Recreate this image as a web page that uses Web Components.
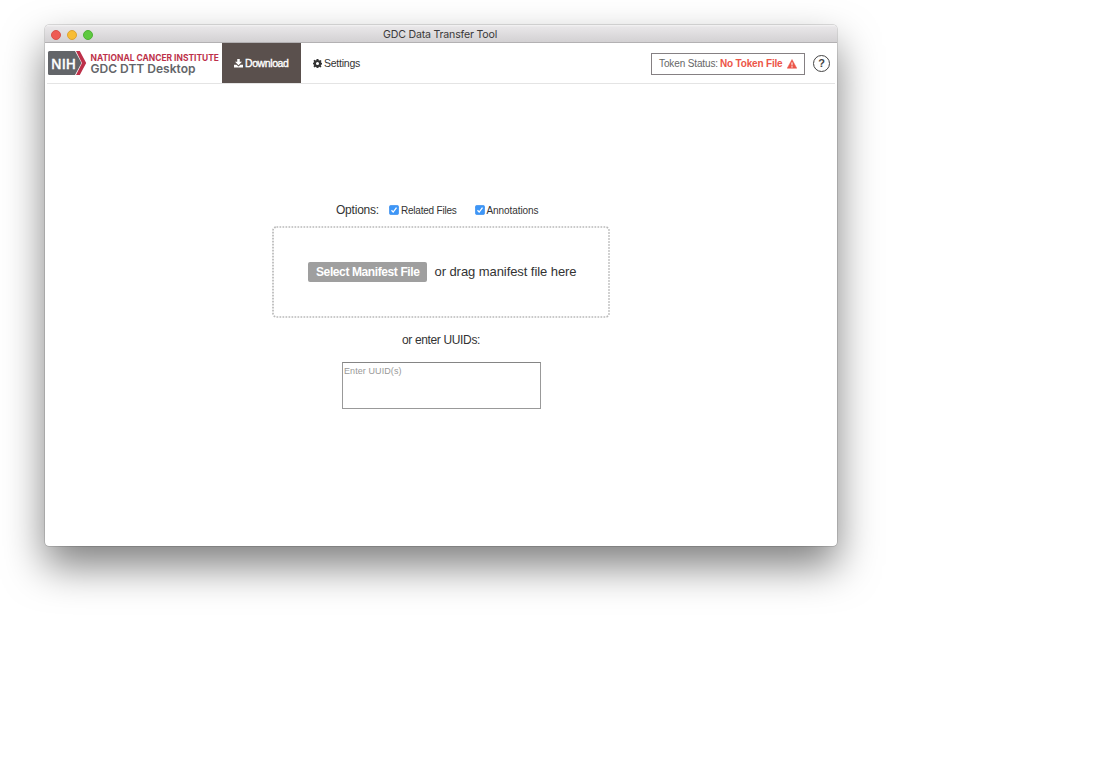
<!DOCTYPE html>
<html lang="en"><head><meta charset="utf-8"><title>GDC Data Transfer Tool</title>
<style>
html,body{margin:0;height:100%;background:#fff;overflow:hidden}
body{font-family:"Liberation Sans",Arial,sans-serif;color:#333;padding:25px 0 0 45px;box-sizing:border-box}
</style></head><body>
<app-window></app-window>
<script>
const define=(name,html,init)=>customElements.define(name,class extends HTMLElement{
  connectedCallback(){
    if(this.shadowRoot)return;
    this.attachShadow({mode:'open'}).innerHTML=html;
    if(init)init(this);
  }
});

// One line of text whose tracking is adjusted to fill the "fit" width.
define('fit-text',`<style>:host{display:block;white-space:nowrap;flex:none}span{display:inline-block}</style><span><slot></slot></span>`,el=>{
  const w=parseFloat(el.getAttribute('fit'));
  el.style.width=w+'px';
  const s=el.shadowRoot.querySelector('span');
  const diff=w-s.getBoundingClientRect().width;
  s.style.letterSpacing=diff/el.textContent.length+'px';
});

define('title-bar',`<style>
:host{display:grid;grid-template-columns:1fr auto 1fr;align-items:center;height:17px;border-bottom:1px solid #b3b1b3;background:linear-gradient(#f4f3f4 0,#e8e6e8 2px,#d3d1d3 100%);border-radius:4px 4px 0 0;color:#3a393a;font:10.6px/16px Inter,"Liberation Sans",sans-serif}
.dots{display:flex;gap:6px;padding:1px 0 0 6px}i{width:10px;height:10px;border-radius:50%;box-sizing:border-box;background:#ee5b54;border:.5px solid #d9524b}
i:nth-child(2){background:#f8bd35;border-color:#dda333}i:nth-child(3){background:#5ec93f;border-color:#4eb135}
fit-text{padding-top:2px;margin-right:2px}
</style><div class="dots"><i></i><i></i><i></i></div><fit-text fit="114">GDC Data Transfer Tool</fit-text><div></div>`);

define('nci-logo',`<style>:host{display:block;width:173px;height:26px}svg{display:block;overflow:visible}</style>
<svg width="173" height="26" viewBox="0 0 173 26">
<path d="M1.5 0H27l6.5 12L27 24H1.5Q0 24 0 22.5v-21Q0 0 1.5 0z" fill="#636569"/>
<path d="M28 0h3.8l6.4 12-6.4 12H28l6-12z" fill="#bd3049"/>
<text x="3" y="17.5" font-family="Open Sans" font-size="15" font-weight="600" fill="#fff" stroke="#fff" stroke-width=".3" textLength="25" lengthAdjust="spacingAndGlyphs">NIH</text>
<text x="42.5" y="9.7" font-family="Inter" font-size="8.9" font-weight="700" fill="#bd3049" textLength="128.5" lengthAdjust="spacingAndGlyphs">NATIONAL CANCER INSTITUTE</text>
<text x="42.5" y="22" font-family="Inter" font-size="12" font-weight="600" fill="#636569" textLength="105" lengthAdjust="spacingAndGlyphs">GDC DTT Desktop</text>
</svg>`);

define('nav-tab',`<style>
:host{display:flex;align-items:center;box-sizing:border-box;height:40px;font-size:10.5px;gap:2px;padding:0 0 0 12px;color:#333}
:host([active]){width:79px;background:#5a504d;color:#fff;-webkit-text-stroke:.35px #fff}
svg{fill:currentColor;display:block}
</style><slot name="icon"></slot><slot></slot>`);

define('token-status',`<style>
:host{display:flex;align-items:center;box-sizing:border-box;width:154px;height:22px;border:1px solid #858083;padding-left:7px;font-size:10px;color:#666}
b{color:#ec5548;margin-left:2px}svg{margin-left:4px}
</style><fit-text fit="59">Token Status:</fit-text><b><fit-text fit="62.5">No Token File</fit-text></b>
<svg width="10" height="10" viewBox="0 0 20 20"><path d="M10 1 19.5 18.5H.5z" fill="#ec5548" stroke="#ec5548" stroke-linejoin="round"/><path d="M8.8 7h2.4l-.4 6H9.2zM8.8 14.4h2.4v2.4H8.8z" fill="#fff"/></svg>`);

define('help-button',`<style>:host{display:flex;box-sizing:border-box;width:17px;height:17px;border:1px solid #444;border-radius:50%;align-items:center;justify-content:center;font:bold 11px/15px "Liberation Sans",sans-serif;color:#444}</style>?`);

define('nav-bar',`<style>
:host{display:flex;align-items:center;height:40px;margin:0 2px;border-bottom:1px solid #e4e4e4}
nci-logo{margin:1px 1px 0}.tabs{display:flex}token-status{margin:1px 8px 0 auto}help-button{margin:1px 5px 0 0}
svg{display:block;fill:currentColor}
</style><nci-logo></nci-logo><div class="tabs">
<nav-tab active><svg slot="icon" width="9" height="9" viewBox="0 0 18 18"><path d="M6.5 0h5v5.5H16L9 12.5 2 5.5h4.5z"/><path d="M0 11.5h5L9 15l4-3.5h5V17H0z"/></svg><fit-text fit="43.5">Download</fit-text></nav-tab>
<nav-tab><svg slot="icon" width="9" height="9" viewBox="0 0 20 20"><path fill-rule="evenodd" d="M8 0h4l.6 3 1.5.6L16.6 2 19 4.4l-1.6 2.5.6 1.3 2 .4v3.6l-2.2.4-.6 1.4 1.6 2.4-2.4 2.4-2.4-1.6-1.5.6-.5 2.2H8l-.5-2.2-1.5-.6-2.4 1.6L1 16l1.6-2.4L2 12.2l-2-.4V8.2l2-.4.6-1.4L1 4 3.4 1.6 6 3.4 7.4 3zm2 6.7a3.4 3.4 0 1 0 0 6.8 3.4 3.4 0 0 0 0-6.8z"/></svg><fit-text fit="36">Settings</fit-text></nav-tab>
</div><token-status></token-status><help-button></help-button>`);

define('check-option',`<style>:host{display:flex;align-items:center;gap:2px;font-size:10px}svg{display:block}</style>
<svg width="10" height="10" viewBox="0 0 10 10"><rect x=".25" y=".25" width="9.5" height="9.5" rx="2" fill="#3d96f7" stroke="#3587e6" stroke-width=".5"/><path d="M2.5 5.2 4.2 7.1 7.5 2.7" fill="none" stroke="#fff" stroke-width="1.3"/></svg><slot></slot>`);

define('drop-zone',`<style>
:host{display:flex;align-items:center;box-sizing:border-box;width:338px;height:92px;padding-left:36px;font-size:13px;color:#333;position:relative}
svg{position:absolute;inset:0}
button{all:unset;box-sizing:border-box;width:119px;height:20px;padding-left:8px;background:#9f9f9f;border-radius:2px;color:#fff;font-weight:bold;font-size:12px;line-height:19px;margin-right:7.5px}
.hint{margin-bottom:2px}
</style><svg width="338" height="92"><rect x="1" y="1" width="336" height="90" rx="3.5" fill="none" stroke="#b9b9b9" stroke-width="1.7" stroke-dasharray="1.7 1.3"/></svg>
<button><fit-text fit="103.5">Select Manifest File</fit-text></button><fit-text class="hint" fit="142">or drag manifest file here</fit-text>`);

define('uuid-input',`<style>:host{display:block}textarea{display:block;box-sizing:border-box;width:199px;height:47px;border:1px solid #999;border-top-color:#858585;border-radius:0;padding:2px 1px;margin:0;resize:none;outline:0;font:9px/12px "Liberation Sans",sans-serif;letter-spacing:.08px}textarea::placeholder{color:#999;opacity:1}</style><textarea placeholder="Enter UUID(s)"></textarea>`);

define('download-view',`<style>
:host{display:flex;flex-direction:column;align-items:center;padding-top:119px}
.options{display:flex;align-items:center;height:14px;width:210px;margin-bottom:9px}
.options>fit-text{font-size:12px;margin-right:10px}check-option+check-option{margin-left:18px}
.or{font-size:12px;line-height:14px;margin:15px 0}uuid-input{margin-left:1px}
</style><div class="options"><fit-text fit="43">Options:</fit-text><check-option><fit-text fit="55.5">Related Files</fit-text></check-option><check-option><fit-text fit="52">Annotations</fit-text></check-option></div>
<drop-zone></drop-zone><fit-text class="or" fit="78">or enter UUIDs:</fit-text><uuid-input></uuid-input>`);

define('app-window',`<style>:host{display:block;width:792px;height:521px;border-radius:4px;background:#fff;box-shadow:0 0 0 .5px rgba(0,0,0,.2),0 0 1px rgba(0,0,0,.25),0 20px 40px rgba(0,0,0,.5)}</style><title-bar></title-bar><nav-bar></nav-bar><download-view></download-view>`);
</script></body></html>
